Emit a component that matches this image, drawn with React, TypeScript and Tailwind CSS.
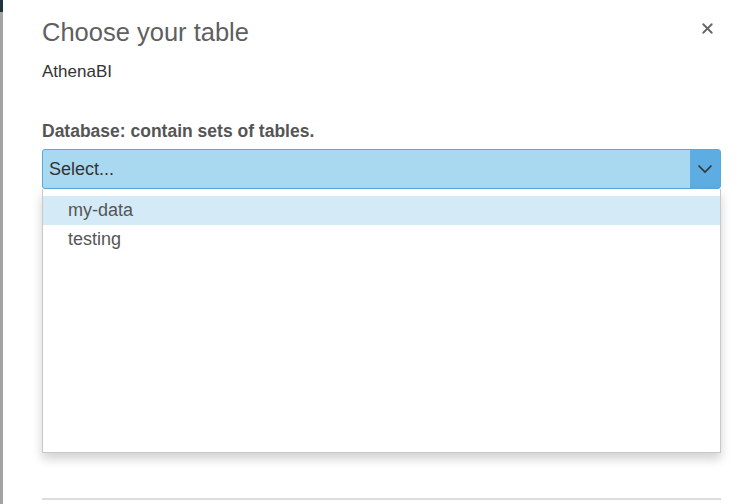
import { X } from "lucide-react";

const options = ["my-data", "testing"];

export default function App() {
  return (
    <div
      className="flex h-[504px] w-[745px] overflow-hidden bg-white"
      style={{ fontFamily: '"Liberation Sans", Arial, sans-serif' }}
    >
      <div className="flex w-[3px] shrink-0 flex-col bg-[#a3a3a3]">
        <div className="h-[12px] bg-[#1f3340]" />
      </div>
      <div className="flex flex-1 flex-col pl-[39px] pr-[24px]">
        <div className="flex items-start justify-between pt-[17px]">
          <h1 className="text-[25.5px] leading-[31px] text-[#5f5f5f]">Choose your table</h1>
          <button className="mr-[5px] mt-[3px] text-[#666]">
            <X className="h-[17px] w-[17px]" strokeWidth={2.6} />
          </button>
        </div>
        <p className="mt-[14px] text-[17px] leading-[20px] text-[#333]">AthenaBI</p>

        <p className="mt-[39px] text-[17.5px] font-bold leading-[20px] text-[#555]">
          Database: contain sets of tables.
        </p>

        <div className="mt-[8px] flex h-[40px] rounded-[3px] border border-[#5aa9dc] bg-[#a9d9f0]">
          <span className="flex flex-1 items-center pl-[6px] text-[18px] text-[#333]">Select...</span>
          <span className="flex w-[30px] items-center justify-center bg-[#5dade2]">
            <svg width="16" height="10" viewBox="0 0 16 10" fill="none">
              <path d="M1.5 1.5 8 8l6.5-6.5" stroke="#333" strokeWidth="1.6" />
            </svg>
          </span>
        </div>

        <div className="flex h-[264px] flex-col border border-t-0 border-[#c8c8c8] bg-white pt-[7px] shadow-[0_6px_10px_rgba(0,0,0,0.18)]">
          {options.map((o, i) => (
            <div
              key={o}
              className={`flex h-[29px] items-center pl-[25px] text-[18px] text-[#555] ${
                i === 0 ? "bg-[#d4ebf7]" : ""
              }`}
            >
              {o}
            </div>
          ))}
        </div>

        <div className="mt-[45px] h-[2px] bg-[#dcdcdc]" />
      </div>
    </div>
  );
}
